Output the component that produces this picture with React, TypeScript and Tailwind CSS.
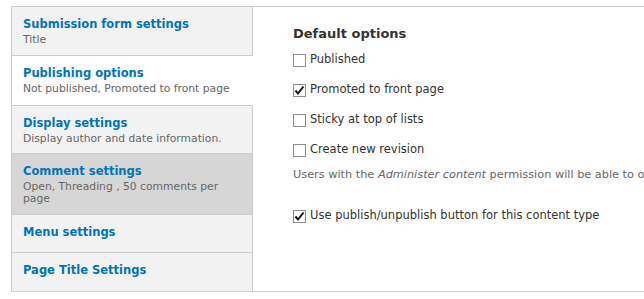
import React from "react";

type Tab = {
  title: string;
  summary?: string;
  active?: boolean;
  dark?: boolean;
  height: string;
};

const tabs: Tab[] = [
  { title: "Submission form settings", summary: "Title", height: "h-[49px]" },
  { title: "Publishing options", summary: "Not published, Promoted to front page", active: true, height: "h-[50px]" },
  { title: "Display settings", summary: "Display author and date information.", height: "h-[49px]" },
  { title: "Comment settings", summary: "Open, Threading , 50 comments per page", dark: true, height: "h-[61px]" },
  { title: "Menu settings", height: "h-[38px]" },
  { title: "Page Title Settings", height: "h-[38px]" },
];

function Checkbox({ checked }: { checked?: boolean }) {
  return (
    <span className="flex h-[13px] w-[13px] shrink-0 items-center justify-center border border-[#8f8f8f] bg-white">
      {checked && (
        <svg width="11" height="11" viewBox="0 0 11 11">
          <path d="M1.5 5.5 L4 8.5 L9.5 1.5" fill="none" stroke="#111" strokeWidth="2" />
        </svg>
      )}
    </span>
  );
}

function Option({ label, checked }: { label: string; checked?: boolean }) {
  return (
    <label className="flex items-center gap-[4px] text-[11.5px] leading-[15px] text-[#333]">
      <Checkbox checked={checked} />
      <span className="-translate-y-[1px]">{label}</span>
    </label>
  );
}

export default function App() {
  return (
    <div
      className="h-[299px] w-[644px] overflow-hidden bg-white pl-[11px] pt-[6px]"
      style={{ fontFamily: '"DejaVu Sans", Verdana, sans-serif' }}
    >
      <div className="flex h-[286px] border-y border-l border-[#ccc]">
        {/* Vertical tabs */}
        <ul className="flex w-[241px] shrink-0 flex-col">
          {tabs.map((tab, i) => (
            <li
              key={tab.title}
              className={`${tab.height} px-[11px] pt-[9px] ${
                i < tabs.length - 1 ? "border-b border-[#ccc]" : ""
              } ${
                tab.active
                  ? "bg-white border-r border-r-white"
                  : tab.dark
                  ? "bg-[#d6d6d6] border-r border-r-[#ccc]"
                  : "bg-[#f2f2f2] border-r border-r-[#ccc]"
              }`}
            >
              <div className="text-[11.5px] font-bold leading-[16px] text-[#0074bd]">{tab.title}</div>
              {tab.summary && (
                <div className="mt-[2px] text-[10.75px] leading-[12px] text-[#666]">{tab.summary}</div>
              )}
            </li>
          ))}
        </ul>

        {/* Panel */}
        <div className="min-w-0 flex-1 overflow-hidden pl-[40px] pt-[18px]">
          <h3 className="text-[13px] font-bold leading-[17px] text-[#333]">Default options</h3>
          <div className="mt-[11px] flex flex-col gap-[15px]">
            <Option label="Published" />
            <Option label="Promoted to front page" checked />
            <Option label="Sticky at top of lists" />
            <Option label="Create new revision" />
          </div>
          <p className="mt-[10px] whitespace-nowrap text-[11.3px] leading-[14px] text-[#666]">
            Users with the <em>Administer content</em> permission will be able to override these options.
          </p>
          <div className="mt-[27px]">
            <Option label="Use publish/unpublish button for this content type" checked />
          </div>
        </div>
      </div>
    </div>
  );
}
